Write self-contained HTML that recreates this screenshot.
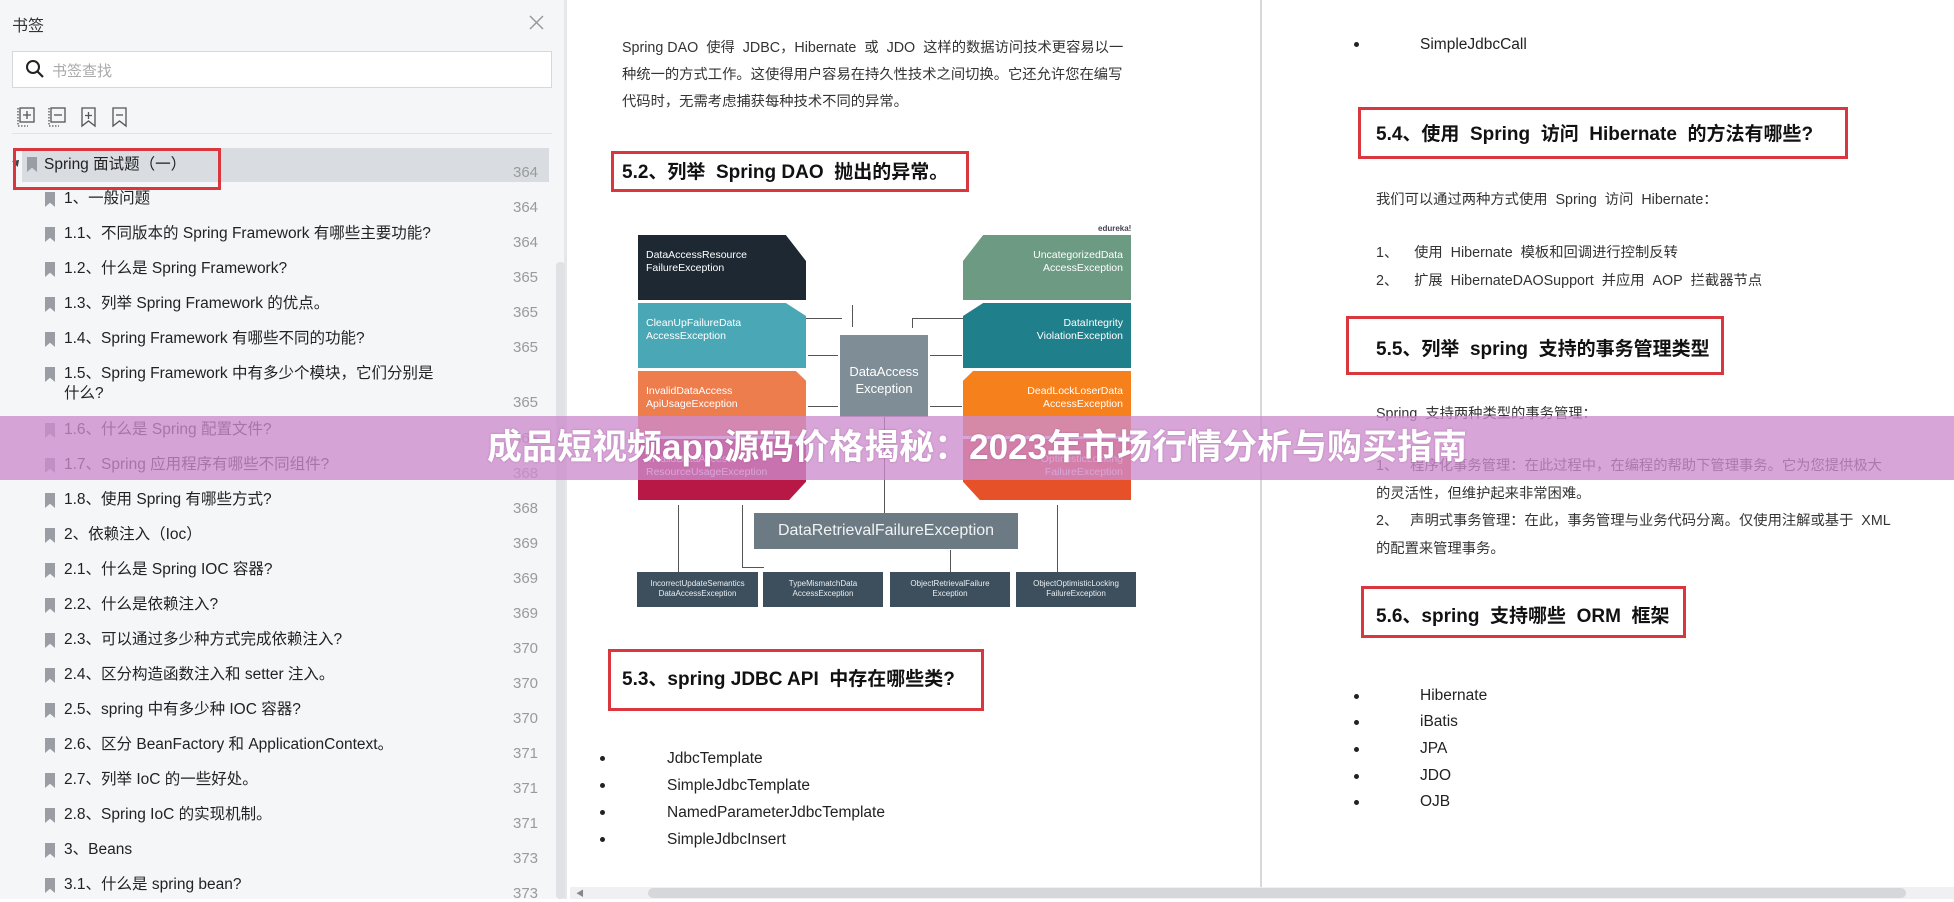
<!DOCTYPE html>
<html><head><meta charset="utf-8">
<style>
*{margin:0;padding:0;box-sizing:border-box}
body{width:1954px;height:899px;overflow:hidden;position:relative;background:#fff;font-family:"Liberation Sans","Noto Sans CJK SC",sans-serif;color:#333}
.a{position:absolute;white-space:nowrap}
#side{position:absolute;left:0;top:0;width:567px;height:899px;background:#f5f6f8;border-right:3px solid #e6e7ea}
.row{position:absolute;left:0;font-size:15.5px;color:#222;line-height:20px}
.pg{position:absolute;left:513px;font-size:15px;color:#9a9a9a}
.bm{position:absolute;width:10px;height:15px;background:#9a9da3;clip-path:polygon(0 0,100% 0,100% 100%,50% 72%,0 100%)}
.red{position:absolute;border:3px solid #d9363e}
.p{font-size:14.3px;color:#333;font-family:"Liberation Sans","Noto Sans CJK SC",sans-serif}
.h{font-size:19px;font-weight:bold;color:#111}
.li{font-size:15.5px;color:#222}
.dot{position:absolute;width:5px;height:5px;border-radius:50%;background:#222}
.bx{position:absolute;color:#fff;font-size:10.5px;line-height:13px;padding:14px 0 0 8px}
.bx.r{text-align:right;padding:14px 8px 0 0}
.sb{position:absolute;background:#3d4f5c;color:#e8eef2;font-size:8px;line-height:10px;text-align:center;padding-top:7px}
.ln{position:absolute;background:#555}
</style></head><body>

<div id="side">
  <div class="a" style="left:12px;top:12px;font-size:16px;color:#333">书签</div>
  <svg class="a" style="left:529px;top:15px" width="15" height="15"><path d="M1 1L14 14M14 1L1 14" stroke="#999" stroke-width="1.5"/></svg>
  <div class="a" style="left:12px;top:51px;width:540px;height:37px;background:#fff;border:1px solid #d6d8dc"></div>
  <svg class="a" style="left:25px;top:59px" width="20" height="20"><circle cx="8" cy="8" r="6" fill="none" stroke="#222" stroke-width="2"/><path d="M12.5 12.5L18 18" stroke="#222" stroke-width="2.2"/></svg>
  <div class="a" style="left:52px;top:60px;font-size:15px;color:#aaa">书签查找</div>
  <svg class="a" style="left:17px;top:106px" width="130" height="22" fill="none" stroke="#555" stroke-width="1.3">
    <rect x="3" y="2" width="14" height="14"/><path d="M10 5v8M6 9h8"/><path d="M1 2v18h10" stroke-dasharray="1.5 1.5"/>
    <rect x="34" y="2" width="14" height="14"/><path d="M37 9h8"/><path d="M32 2v18h10" stroke-dasharray="1.5 1.5"/>
    <path d="M65 2h13v18l-6.5-5-6.5 5z"/><path d="M71.5 6v7M68 9.5h7"/>
    <path d="M96 2h13v18l-6.5-5-6.5 5z"/><path d="M99 9h7"/>
  </svg>
  <div class="a" style="left:12px;top:133px;width:540px;height:1px;background:#e2e3e6"></div>
  <div class="a" style="left:22px;top:148px;width:527px;height:34px;background:#d9dce1"></div>
  <div class="a" style="left:13px;top:159px;width:0;height:0;border-left:4px solid transparent;border-right:4px solid transparent;border-bottom:6px solid #444;transform:rotate(45deg)"></div>
  <div class="bm" style="left:27px;top:157px"></div>
  <div class="row" style="left:44px;top:155px">Spring 面试题（一）</div>
  <div class="pg" style="top:164px">364</div>
  <div class="red" style="left:13px;top:148px;width:208px;height:42px"></div>

  <div class="bm" style="left:45px;top:192px"></div><div class="row" style="left:64px;top:189px">1、一般问题</div><div class="pg" style="top:199px">364</div>
  <div class="bm" style="left:45px;top:227px"></div><div class="row" style="left:64px;top:224px">1.1、不同版本的 Spring Framework 有哪些主要功能?</div><div class="pg" style="top:234px">364</div>
  <div class="bm" style="left:45px;top:262px"></div><div class="row" style="left:64px;top:259px">1.2、什么是 Spring Framework?</div><div class="pg" style="top:269px">365</div>
  <div class="bm" style="left:45px;top:297px"></div><div class="row" style="left:64px;top:294px">1.3、列举 Spring Framework 的优点。</div><div class="pg" style="top:304px">365</div>
  <div class="bm" style="left:45px;top:332px"></div><div class="row" style="left:64px;top:329px">1.4、Spring Framework 有哪些不同的功能?</div><div class="pg" style="top:339px">365</div>
  <div class="bm" style="left:45px;top:367px"></div><div class="row" style="left:64px;top:364px">1.5、Spring Framework 中有多少个模块，它们分别是</div><div class="row" style="left:64px;top:384px">什么?</div><div class="pg" style="top:394px">365</div>
  <div class="bm" style="left:45px;top:423px"></div><div class="row" style="left:64px;top:420px">1.6、什么是 Spring 配置文件?</div><div class="pg" style="top:430px">365</div>
  <div class="bm" style="left:45px;top:458px"></div><div class="row" style="left:64px;top:455px">1.7、Spring 应用程序有哪些不同组件?</div><div class="pg" style="top:465px">368</div>
  <div class="bm" style="left:45px;top:493px"></div><div class="row" style="left:64px;top:490px">1.8、使用 Spring 有哪些方式?</div><div class="pg" style="top:500px">368</div>
  <div class="bm" style="left:45px;top:528px"></div><div class="row" style="left:64px;top:525px">2、依赖注入（Ioc）</div><div class="pg" style="top:535px">369</div>
  <div class="bm" style="left:45px;top:563px"></div><div class="row" style="left:64px;top:560px">2.1、什么是 Spring IOC 容器?</div><div class="pg" style="top:570px">369</div>
  <div class="bm" style="left:45px;top:598px"></div><div class="row" style="left:64px;top:595px">2.2、什么是依赖注入?</div><div class="pg" style="top:605px">369</div>
  <div class="bm" style="left:45px;top:633px"></div><div class="row" style="left:64px;top:630px">2.3、可以通过多少种方式完成依赖注入?</div><div class="pg" style="top:640px">370</div>
  <div class="bm" style="left:45px;top:668px"></div><div class="row" style="left:64px;top:665px">2.4、区分构造函数注入和 setter 注入。</div><div class="pg" style="top:675px">370</div>
  <div class="bm" style="left:45px;top:703px"></div><div class="row" style="left:64px;top:700px">2.5、spring 中有多少种 IOC 容器?</div><div class="pg" style="top:710px">370</div>
  <div class="bm" style="left:45px;top:738px"></div><div class="row" style="left:64px;top:735px">2.6、区分 BeanFactory 和 ApplicationContext。</div><div class="pg" style="top:745px">371</div>
  <div class="bm" style="left:45px;top:773px"></div><div class="row" style="left:64px;top:770px">2.7、列举 IoC 的一些好处。</div><div class="pg" style="top:780px">371</div>
  <div class="bm" style="left:45px;top:808px"></div><div class="row" style="left:64px;top:805px">2.8、Spring IoC 的实现机制。</div><div class="pg" style="top:815px">371</div>
  <div class="bm" style="left:45px;top:843px"></div><div class="row" style="left:64px;top:840px">3、Beans</div><div class="pg" style="top:850px">373</div>
  <div class="bm" style="left:45px;top:878px"></div><div class="row" style="left:64px;top:875px">3.1、什么是 spring bean?</div><div class="pg" style="top:885px">373</div>
  <div class="a" style="left:556px;top:262px;width:9px;height:637px;background:#e0e1e4;border-radius:4px"></div>
</div>

<!-- page separator & bottom scrollbar -->
<div class="a" style="left:1260px;top:0;width:2px;height:887px;background:#d8d8d8"></div>
<div class="a" style="left:570px;top:887px;width:1384px;height:12px;background:#f0f0f2"></div>
<div class="a" style="left:648px;top:888px;width:1258px;height:10px;background:#d6d7db;border-radius:5px"></div>
<div class="a" style="left:576px;top:888px;font-size:8px;color:#888">◀</div>

<!-- left page -->
<div class="a p" style="left:622px;top:36px">Spring DAO&nbsp; 使得&nbsp; JDBC，Hibernate&nbsp; 或&nbsp; JDO&nbsp; 这样的数据访问技术更容易以一</div>
<div class="a p" style="left:622px;top:63px">种统一的方式工作。这使得用户容易在持久性技术之间切换。它还允许您在编写</div>
<div class="a p" style="left:622px;top:90px">代码时，无需考虑捕获每种技术不同的异常。</div>
<div class="red" style="left:611px;top:151px;width:358px;height:41px"></div>
<div class="a h" style="left:622px;top:157px">5.2、列举&nbsp; Spring DAO&nbsp; 抛出的异常。</div>

<!-- diagram -->
<div class="a" style="left:1098px;top:224px;font-size:8px;color:#445;font-weight:bold">edureka!</div>
<div class="bx" style="left:638px;top:235px;width:168px;height:65px;background:#1e2833;clip-path:polygon(0 0,88% 0,100% 40%,100% 100%,0 100%)">DataAccessResource<br>FailureException</div>
<div class="bx" style="left:638px;top:303px;width:168px;height:65px;background:#4aa7b6;clip-path:polygon(0 0,88% 0,100% 20%,100% 100%,0 100%)">CleanUpFailureData<br>AccessException</div>
<div class="bx" style="left:638px;top:371px;width:168px;height:65px;background:#ee7d4d;clip-path:polygon(0 0,94% 0,100% 15%,100% 100%,0 100%)">InvalidDataAccess<br>ApiUsageException</div>
<div class="bx" style="left:638px;top:439px;width:168px;height:61px;background:#b71846;clip-path:polygon(0 0,100% 0,100% 70%,90% 100%,0 100%)">InvalidDataAccess<br>ResourceUsageException</div>
<div class="bx r" style="left:963px;top:235px;width:168px;height:65px;background:#6c9a83;clip-path:polygon(12% 0,100% 0,100% 100%,0 100%,0 40%)">UncategorizedData<br>AccessException</div>
<div class="bx r" style="left:963px;top:303px;width:168px;height:65px;background:#1f7f8b;clip-path:polygon(12% 0,100% 0,100% 100%,0 100%,0 20%)">DataIntegrity<br>ViolationException</div>
<div class="bx r" style="left:963px;top:371px;width:168px;height:65px;background:#f6801c;clip-path:polygon(6% 0,100% 0,100% 100%,0 100%,0 15%)">DeadLockLoserData<br>AccessException</div>
<div class="bx r" style="left:963px;top:439px;width:168px;height:61px;background:#e6512a;clip-path:polygon(0 0,100% 0,100% 100%,10% 100%,0 70%)">OptimisticLocking<br>FailureException</div>
<div class="a" style="left:840px;top:335px;width:88px;height:82px;background:#7f8d96;color:#fff;font-size:13px;text-align:center;padding-top:28px;line-height:17px;white-space:normal">DataAccess<br>Exception</div>
<div class="ln" style="left:884px;top:417px;width:1px;height:96px"></div>
<div class="ln" style="left:806px;top:318px;width:36px;height:1px"></div><div class="ln" style="left:852px;top:305px;width:1px;height:22px"></div>
<div class="ln" style="left:808px;top:355px;width:30px;height:1px"></div>
<div class="ln" style="left:808px;top:406px;width:30px;height:1px"></div>
<div class="ln" style="left:930px;top:355px;width:32px;height:1px"></div>
<div class="ln" style="left:930px;top:406px;width:32px;height:1px"></div>
<div class="ln" style="left:912px;top:318px;width:51px;height:1px"></div><div class="ln" style="left:912px;top:318px;width:1px;height:10px"></div>
<div class="a" style="left:754px;top:513px;width:264px;height:36px;background:#6c7b83;color:#f0f3f5;font-size:16px;text-align:center;line-height:36px">DataRetrievalFailureException</div>
<div class="ln" style="left:678px;top:505px;width:1px;height:67px"></div>
<div class="ln" style="left:742px;top:505px;width:1px;height:62px"></div><div class="ln" style="left:742px;top:567px;width:22px;height:1px"></div>
<div class="ln" style="left:950px;top:550px;width:1px;height:22px"></div>
<div class="ln" style="left:1057px;top:505px;width:1px;height:67px"></div>
<div class="sb" style="left:637px;top:572px;width:121px;height:35px">IncorrectUpdateSemantics<br>DataAccessException</div>
<div class="sb" style="left:763px;top:572px;width:120px;height:35px">TypeMismatchData<br>AccessException</div>
<div class="sb" style="left:890px;top:572px;width:120px;height:35px">ObjectRetrievalFailure<br>Exception</div>
<div class="sb" style="left:1016px;top:572px;width:120px;height:35px">ObjectOptimisticLocking<br>FailureException</div>

<div class="red" style="left:608px;top:649px;width:376px;height:62px"></div>
<div class="a h" style="left:622px;top:664px">5.3、spring JDBC API&nbsp; 中存在哪些类?</div>
<div class="dot" style="left:600px;top:756px"></div><div class="a li" style="left:667px;top:750px">JdbcTemplate</div>
<div class="dot" style="left:600px;top:783px"></div><div class="a li" style="left:667px;top:777px">SimpleJdbcTemplate</div>
<div class="dot" style="left:600px;top:810px"></div><div class="a li" style="left:667px;top:804px">NamedParameterJdbcTemplate</div>
<div class="dot" style="left:600px;top:837px"></div><div class="a li" style="left:667px;top:831px">SimpleJdbcInsert</div>

<!-- right page -->
<div class="dot" style="left:1354px;top:42px"></div><div class="a li" style="left:1420px;top:36px">SimpleJdbcCall</div>
<div class="red" style="left:1358px;top:107px;width:490px;height:52px"></div>
<div class="a h" style="left:1376px;top:119px">5.4、使用&nbsp; Spring&nbsp; 访问&nbsp; Hibernate&nbsp; 的方法有哪些?</div>
<div class="a p" style="left:1376px;top:188px">我们可以通过两种方式使用&nbsp; Spring&nbsp; 访问&nbsp; Hibernate：</div>
<div class="a p" style="left:1376px;top:241px">1、&nbsp;&nbsp;&nbsp; 使用&nbsp; Hibernate&nbsp; 模板和回调进行控制反转</div>
<div class="a p" style="left:1376px;top:269px">2、&nbsp;&nbsp;&nbsp; 扩展&nbsp; HibernateDAOSupport&nbsp; 并应用&nbsp; AOP&nbsp; 拦截器节点</div>
<div class="red" style="left:1346px;top:316px;width:378px;height:59px"></div>
<div class="a h" style="left:1376px;top:334px">5.5、列举&nbsp; spring&nbsp; 支持的事务管理类型</div>
<div class="a p" style="left:1376px;top:402px">Spring&nbsp; 支持两种类型的事务管理：</div>
<div class="a p" style="left:1376px;top:454px">1、&nbsp;&nbsp; 程序化事务管理：在此过程中，在编程的帮助下管理事务。它为您提供极大</div>
<div class="a p" style="left:1376px;top:482px">的灵活性，但维护起来非常困难。</div>
<div class="a p" style="left:1376px;top:509px">2、&nbsp;&nbsp; 声明式事务管理：在此，事务管理与业务代码分离。仅使用注解或基于&nbsp; XML</div>
<div class="a p" style="left:1376px;top:537px">的配置来管理事务。</div>
<div class="red" style="left:1361px;top:586px;width:325px;height:52px"></div>
<div class="a h" style="left:1376px;top:601px">5.6、spring&nbsp; 支持哪些&nbsp; ORM&nbsp; 框架</div>
<div class="dot" style="left:1354px;top:694px"></div><div class="a li" style="left:1420px;top:687px">Hibernate</div>
<div class="dot" style="left:1354px;top:720px"></div><div class="a li" style="left:1420px;top:713px">iBatis</div>
<div class="dot" style="left:1354px;top:747px"></div><div class="a li" style="left:1420px;top:740px">JPA</div>
<div class="dot" style="left:1354px;top:774px"></div><div class="a li" style="left:1420px;top:767px">JDO</div>
<div class="dot" style="left:1354px;top:800px"></div><div class="a li" style="left:1420px;top:793px">OJB</div>

<!-- overlay band -->
<div class="a" style="left:0;top:416px;width:1954px;height:64px;background:rgba(205,140,205,0.78)"></div>
<div class="a" style="left:0;top:426px;width:1954px;text-align:center;font-size:35px;font-weight:bold;color:#fff;line-height:44px;text-shadow:0 0 2px rgba(120,60,120,.4)">成品短视频app源码价格揭秘：2023年市场行情分析与购买指南</div>
</body></html>
